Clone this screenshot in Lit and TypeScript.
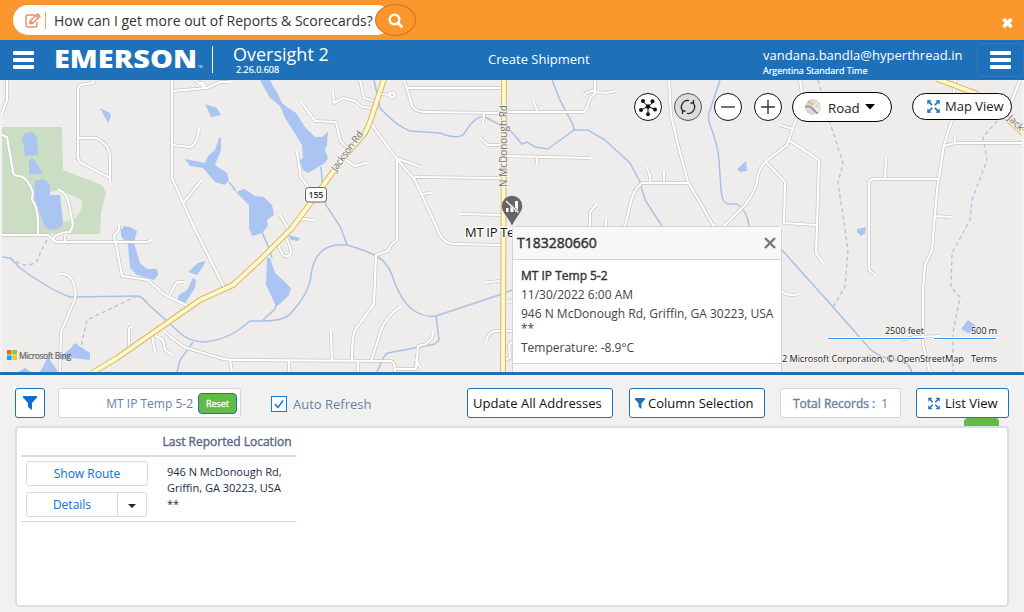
import { LitElement, html, css, svg } from "lit";
import { customElement } from "lit/decorators.js";

const water = [
  "M22 140L25 133 33 132 37 138 38 155 25 156 24 147Z",
  "M29 160L33 158 38 166 43 172 40 174 29 174Z",
  "M35 181L43 179 50 184 50 195 60 195 63 225 58 229 50 230 45 227 36 205 34 195Z",
  "M100 108L110 113 111 117 108 123Z",
  "M205 104L217 108 221 115 211 117Z",
  "M185 159L205 163 208 156 215 150 219 138 221 137 221 150 215 165 227 173 229 180 225 185 215 182 203 168 190 166Z",
  "M236 192L244 189 255 196 264 197 272 205 274 215 267 220 268 226 262 233 252 236 249 228 249 205Z",
  "M267 258L270 258 275 273 284 281 291 288 289 295 280 304 276 306 266 285Z",
  "M288 235L300 238 298 241 291 240Z",
  "M260 80L270 80 273 86 277 92 282 103 287 107 296 113 305 127 315 137 322 137 328 132 327 145 325 150 328 158 325 163 308 173 303 170 299 160 303 158 302 145 294 132 285 118 280 106 270 98 262 84Z",
  "M121 230L124 226 130 227 137 231 134 243 140 263 147 269 157 269 158 275 154 280 137 275 130 268 128 245 121 236Z",
  "M188 272L198 263 206 261 200 271 197 275Z",
  "M177 301L179 295 187 290 193 278 196 280 195 288 185 303Z",
  "M60 357L70 349 75 343 82 348 90 353 90 360 73 358 62 360Z",
  "M40 372L48 357 57 370 57 372Z",
  "M18 372L25 368 31 372Z",
  "M737 169L746 161 747 171 740 172Z",
  "M857 229L866 227 865 233 861 236 857 232Z",
  "M961 329L968 320 975 325 978 331 968 333Z",
];

const streams = [
  "M229 182L236 191",
  "M321 167L322 180 326 205 341 228 347 245",
  "M262 232L268 246 272 258",
  "M2 257L10 258 20 268Q50 290 70 297L137 296Q142 296 148 304L180 333Q190 342 205 342 225 340 240 329L250 321 262 321Q285 321 291 313 310 292 311 275 315 247 337 245L347 245Q365 250 376 256 386 260 392 275 400 300 413 310 425 318 436 316L502 294 512 290",
  "M193 342L180 360 177 372",
  "M262 321L275 309 277 302",
  "M436 316L439 340 435 344 388 353Q384 355 382 361L377 372",
  "M374 80L380 108Q395 125 410 131L440 133Q458 140 464 134 475 115 485 117L500 125 510 130 522 144 527 142 535 147 548 149 574 130",
  "M552 80L560 100 573 125 574 130 588 130 605 140 630 163 640 182 645 200 662 226",
  "M720 80L710 110Q707 115 710 125 718 145 719 160L721 190Q722 203 728 204L737 204Q748 212 749 226",
  "M782 250L833 307 870 349Q880 358 895 360 908 360 912 372",
];

const creeks = [
  "M10 258L20 264Q38 268 40 253L48 238",
  "M137 296L87 320 81 346",
  "M818 80L830 123 843 163 838 183 848 250 845 287 833 307",
  "M1012 106L998 120 983 137 987 160 972 200 970 220 952 253 951 287 960 297 953 333 953 372",
];

const roads = [
  "M7 80L7 100 2 113",
  "M94 80L93 83 80 85 78 88 78 158Q79 162 83 164L110 178 110 182M79 138L96 138Q109 144 110 155L110 178",
  "M172 80L172 178 183 203 193 225 224 287",
  "M172 91L207 88 220 82 229 82M195 80L205 88M199 84Q204 80 205 88",
  "M172 145L190 147Q197 145 199 129M183 203L201 181",
  "M2 135L7 137 13 172Q13 176 20 176 28 178 33 192L32 200Q37 205 38 220L38 234",
  "M59 190Q68 193 70 210L73 225 70 232Q54 233 53 240",
  "M2 235L48 235 56 242 148 242 151 240M65 242L65 236",
  "M119 225L119 230 114 236 117 249 122 276 148 280 165 295 188 306M169 297L175 285Q176 281 184 282",
  "M60 274Q73 273 75 290 77 298 72 306L61 332 60 372",
  "M129 350L129 330Q129 327 131 327M152 336L155 352M156 336L163 340 165 350 171 354",
  "M163 330Q180 345 187 348L220 358Q225 360 240 360L390 361Q395 361 395 372M230 360L232 372M289 361L289 372M358 362L358 372M332 361L331 332",
  "M397 160L397 240 391 245 388 251 376 255 374 304 355 330Q352 337 352 361M400 307Q383 318 378 340L371 361",
  "M433 332L432 338 426 344 418 346 416 369 396 369M416 360L420 367",
  "M415 180L437 228Q442 244 455 244L502 245M487 282L502 281M503 302L516 301M486 342Q488 331 497 331L516 331M503 360L510 358 509 345 514 340",
  "M279 246Q283 260 290 255 293 250 285 236",
  "M404 80Q409 95 412 106 416 112 425 112L504 113M407 88L504 88M484 114L483 124M480 138L488 145 500 145",
  "M372 125L396 158 415 180M396 158L421 167M415 177L500 178M421 194L431 193M461 214L502 215",
  "M382 94L390 95M373 108L362 107 355 101 343 98 334 103 333 92M374 101L364 98 360 80",
  "M302 103L315 121 336 122 340 140 346 147M346 160L355 166 366 163M297 152L301 178 309 188M280 215L288 228M297 222L303 219 313 220",
  "M505 112L584 112 587 108 590 98 595 93 595 80M584 96L586 93 595 90M596 92L606 93 616 91M537 111L534 102M505 156L590 158M537 157L537 164",
  "M669 80L671 115 678 145 688 182 713 225M688 183L642 183Q633 190 630 205L625 226M650 183L650 176 647 168M664 183L664 172M590 226L590 212 596 205M606 226L606 220",
  "M725 225L745 205Q757 190 758 175 762 163 770 158L787 145 796 120 803 100 800 80M780 125L793 129",
  "M790 141L819 160 817 225 816 253 823 263M766 162L785 182 784 223 816 225",
  "M874 274L869 270 869 183Q869 179 875 179L938 179M885 178L886 159",
  "M955 80L952 120 944 145 937 190 932 250 925 265 923 290 923 345 930 372M944 146L955 143 1022 143M955 143L955 136M935 216L951 217",
  "M782 292Q790 297 798 294M900 340L915 337 940 336M1020 80L1011 103",
];

const highways = [
  "M92 373L117 358 200 300 233 285 260 260 292 228 320 190 343 158 365 133 370 122 384 79",
  "M504 79L503 373",
  "M937 79L975 93 1000 112 1023 133",
];

const funnel = svg`<path d="M0 0H14V1.5L9 7V14L5 11V7L0 1.5Z"/>`;
const expand = svg`<g fill="none" stroke="currentColor" stroke-width="1.3"><path d="M1 4.5V1H4.5M9.500 1H13V4.500M13 9.500V13H9.500M4.500 13H1V9.500"/><path d="M1 1L5.500 5.500M13 1L8.500 5.500M1 13L5.500 8.500M13 13L8.500 8.500" stroke-width="1.700"/></g>`;

@customElement("road-map")
class RoadMap extends LitElement {
  static styles = css`
    :host { display: block; height: 292px; }
    svg { display: block; }
    text { font-family: "Open Sans", sans-serif; }
    .halo { paint-order: stroke; stroke: #fff; stroke-width: 2.5px; stroke-linejoin: round; }
    .soft { paint-order: stroke; stroke: #f6f5f0; stroke-width: 1.5px; stroke-linejoin: round; }
  `;
  render() {
    return html`<svg width="1024" height="292" viewBox="0 80 1024 292">
      <rect y="80" width="1024" height="292" fill="#f2f2f2"/>
      <rect x="2" y="80" width="1020" height="292" fill="#eeedeb"/>
      <path fill="#cbdec3" d="M2 127H62L63 170 102 185 106 193 101 213 100 234H2Z"/>
      <path fill="#e9ebe4" d="M50 192L60 190 82 200Q84 208 76 218L70 221 63 222 60 195H50Z"/>
      <g fill="#aac5f2">${water.map((d) => svg`<path d=${d}/>`)}</g>
      <g fill="none" stroke="#a9c1e6" stroke-width="1.500">${streams.map((d) => svg`<path d=${d}/>`)}</g>
      <g fill="none" stroke="#afc1e2" stroke-width="1.300" stroke-dasharray="4 3">${creeks.map((d) => svg`<path d=${d}/>`)}</g>
      <g fill="none" stroke="#c9c7c4" stroke-width="3.600" stroke-linejoin="round">${roads.map((d) => svg`<path d=${d}/>`)}<circle cx="392" cy="95" r="2.500"/></g>
      <g fill="none" stroke="#fff" stroke-width="2.200" stroke-linejoin="round" stroke-linecap="round">${roads.map((d) => svg`<path d=${d}/>`)}<circle cx="392" cy="95" r="2.500"/></g>
      <g fill="none" stroke="#dbb961" stroke-width="5.800" stroke-linejoin="round">${highways.map((d) => svg`<path d=${d}/>`)}</g>
      <g fill="none" stroke="#fff8cf" stroke-width="3.800" stroke-linejoin="round">${highways.map((d) => svg`<path d=${d}/>`)}</g>
      <g font-size="10" fill="#6f6f6f">
        <text class="soft" transform="translate(336 172) rotate(-54)" textLength="47">Jackson Rd</text>
        <text class="soft" transform="translate(506.500 187) rotate(-90)" textLength="82">N McDonough Rd</text>
        <text class="soft" transform="translate(1007 119) rotate(44)">Jack</text>
      </g>
      <rect x="305.500" y="187.500" width="21" height="14.500" rx="3" fill="#fff" stroke="#666"/>
      <text x="308.500" y="198" font-size="9" font-weight="600" fill="#333" textLength="15">155</text>
      <text class="halo" x="465" y="237" font-size="13" fill="#111" textLength="90">MT IP Temp 5-2</text>
      <path fill="#666" d="M512 225.500C508 217 501.700 212 501.700 206A10.300 10.300 0 0 1 522.300 206C522.300 212 516 217 512 225.500Z"/>
      <path fill="#fff" d="M506 208h2.500v4H506zM510.500 205h3v7h-3zM515 201h3v11h-3z"/>
      <path stroke="#666" stroke-width="2.400" d="M507 201L519 213"/><path stroke="#fff" stroke-width="1.300" d="M506 201L518.500 212.500"/>
      <path fill="#f26522" d="M7 350h4.600v4.600H7z"/><path fill="#8dc63f" d="M12.400 350H17v4.600h-4.600z"/>
      <path fill="#00aeef" d="M7 355.400h4.600V360H7z"/><path fill="#ffc20e" d="M12.400 355.400H17V360h-4.600z"/>
      <text x="19" y="358.500" font-size="8.500" fill="#666" stroke="#666" stroke-width=".2" textLength="52">Microsoft Bing</text>
      <path stroke="#fff" stroke-width="3" d="M827 338.500H924.500M933.500 338.500H997"/>
      <path stroke="#3b93ee" d="M828 338.500H924M934 338.500H996"/>
      <g font-size="9.300" fill="#222">
        <text class="soft" x="885" y="334" textLength="39">2500 feet</text>
        <text class="soft" x="971" y="334" textLength="26">500 m</text>
        <text class="soft" x="782" y="362" textLength="182">2 Microsoft Corporation, © OpenStreetMap</text>
        <text class="soft" x="971" y="362" textLength="26">Terms</text>
      </g>
    </svg>`;
  }
}

@customElement("app-root")
class AppRoot extends LitElement {
  static styles = css`
    :host { display: flex; flex-direction: column; width: 1024px; height: 612px; overflow: hidden; background: #f1f1f1; font-family: "Open Sans", sans-serif; color: #333; }
    * { box-sizing: border-box; }
    svg { display: block; flex: none; }
    div, span, button { white-space: nowrap; }
    button { font: inherit; padding: 0; }
    .banner { height: 40px; flex: none; background: #fa962c; display: flex; align-items: center; padding: 0 10px 0 13px; }
    .search { display: flex; align-items: center; width: 379px; height: 30px; background: #fff; border-radius: 15px; padding-left: 12px; }
    .bar { width: 1px; height: 17px; background: #f0a07a; margin: 1px 8px 0 4px; }
    .ask { font-size: 14px; line-height: 30px; width: 318px; padding-top: 1px; }
    .go { width: 41px; height: 32px; margin-left: -17px; border: 1px solid #c9781f; border-radius: 50%; background: #fa962c; display: grid; place-items: center; }
    .close { margin: 5px 0 0 auto; }
    .top { height: 40px; flex: none; background: #1e70b9; color: #fff; display: flex; }
    .burger { width: 21px; display: flex; flex-direction: column; gap: 3px; }
    .burger i { height: 4px; background: #fff; border-radius: 1px; }
    .left { display: flex; width: 488px; padding-left: 13px; }
    .left .burger { margin-top: 11px; }
    .logo { margin-left: 20px; }
    .rule { width: 1px; height: 27px; background: #fff; margin: 6px 0 0 9px; }
    .app { padding-left: 20px; }
    .name { font-size: 18px; line-height: 20px; margin-top: 4px; }
    .ver { font-size: 9px; line-height: 11px; padding-left: 3px; -webkit-text-stroke: .2px; }
    .title { width: 275px; font-size: 13px; line-height: 39px; }
    .user { width: 214px; }
    .mail { font-size: 13px; line-height: 18px; margin-top: 6px; letter-spacing: .02px; }
    .zone { font-size: 9px; line-height: 13px; -webkit-text-stroke: .2px; }
    .menu { width: 47px; height: 34px; margin-top: 3px; border: 1px solid #2d7bc0; border-radius: 4px; padding: 7px 0 0 12px; }
    .map { position: relative; flex: none; height: 295px; overflow: hidden; border-bottom: 3px solid #1e70b9; }
    .tools { position: absolute; top: 12px; left: 634px; display: flex; align-items: center; }
    .tools .disc { width: 28px; height: 28px; margin-right: 12px; border: 1px solid #111; border-radius: 50%; background: #fff; display: grid; place-items: center; }
    .tools .dim { background: #dcdcdc; border-color: #555; }
    .pill { display: flex; align-items: center; border: 1px solid #000; border-radius: 16px; background: #fff; font-size: 13.300px; color: #222; }
    .road { width: 100px; height: 30px; padding-left: 12px; margin-left: -2px; }
    .road svg + span { margin: 1px 5px 0 7px; }
    .view { width: 100px; height: 27px; margin: -2px 0 0 20px; padding-left: 14px; gap: 5px; font-size: 13px; }
    .popup { position: absolute; left: 512px; top: 146px; width: 270px; height: 170px; background: #fff; border: 1px solid #d4d4d4; border-radius: 4px; font-size: 12px; color: #444; }
    .head { height: 33px; background: #f7f7f7; border-bottom: 1px solid #d4d4d4; display: flex; align-items: center; justify-content: space-between; padding: 0 5px 0 4px; font-size: 14px; line-height: 32px; color: #333; -webkit-text-stroke: .45px #333; }
    .tid { margin-top: -1px; }
    .info { padding: 6px 8px 0; line-height: 19px; height: 103px; }
    .info b { font-weight: 400; -webkit-text-stroke: .4px #333; color: #333; }
    .stars { line-height: 11px; padding-top: 0; }
    .temp { margin-top: 4px; }
    .foot { border-top: 1px solid #d4d4d4; height: 30px; background: #f7f7f7; }
    .bar2 { height: 43px; flex: none; display: flex; padding: 13px 15px 0; align-items: flex-start; font-size: 13px; color: #111; }
    .btn { height: 30px; background: #fff; border: 1px solid #1e70b9; border-radius: 3px; display: flex; align-items: center; color: #111; }
    .filter { width: 30px; justify-content: center; color: #0b6fd3; }
    .muted { border-color: #d2d6dd; color: #6b7fa3; }
    .term { width: 183px; margin-left: 13px; justify-content: flex-end; padding-right: 3px; gap: 5px; font-size: 12px; }
    .reset { width: 39px; height: 21px; background: #61bb46; border: 1px solid #1e70b9; border-radius: 4px; color: #fff; font-size: 9px; -webkit-text-stroke: .3px; }
    .auto { display: flex; align-items: center; gap: 6px; width: 196px; margin: 8px 0 0 30px; height: 16px; color: #6b7fa3; font-size: 13px; }
    .box { width: 16px; height: 16px; border: 1px solid #0b7be8; background: #fff; }
    .update { width: 146px; padding-left: 5px; }
    .column { width: 136px; margin-left: 16px; padding-left: 5px; gap: 3px; }
    .total { width: 121px; margin-left: 15px; padding-left: 12px; gap: 6px; font-size: 12px; }
    .total b { font-weight: 400; -webkit-text-stroke: .4px; }
    .list { width: 93px; margin-left: 15px; padding-left: 11px; gap: 5px; }
    .tabrow { height: 8px; flex: none; display: flex; justify-content: flex-end; padding-right: 25px; }
    .tab { width: 35px; background: #61bb46; border-radius: 4px 4px 0 0; }
    .panel { width: 994px; height: 181px; margin-left: 15px; background: #fff; border: 2px solid #d9dde8; border-radius: 4px; padding-left: 4px; }
    .grid { width: 275px; }
    .th { height: 29px; border-bottom: 2px solid #d9dae6; line-height: 28px; font-size: 12px; color: #5a6785; text-align: right; padding-right: 4.500px; -webkit-text-stroke: .4px; }
    .tr { display: flex; height: 65px; border-bottom: 1px solid #d9dae6; padding: 4px 0 0 5px; }
    .acts { width: 141px; display: flex; flex-direction: column; gap: 6px; font-size: 12px; }
    .act { width: 122px; height: 25px; border: 1px solid #d9dae6; border-radius: 3px; color: #0b6fd3; background: #fff; display: flex; align-items: center; }
    .act span { flex: 1; text-align: center; }
    .act .drop { flex: none; width: 29px; height: 23px; border-left: 1px solid #d9dae6; display: grid; place-items: center; padding-top: 3px; }
    .split { width: 121px; }
    .addr { font-size: 11px; line-height: 16px; color: #222b45; padding-top: 3px; }
  `;

  render() {
    return html`
      <div class="banner">
        <div class="search">
          <svg width="16" height="15" viewBox="0 0 16 15" fill="none" stroke="#ef8c62" stroke-width="1.400"><path d="M10 2H3Q1 2 1 4V12Q1 14 3 14H10Q12 14 12 12V9"/><path fill="#fff" d="M5 10.500V8L12.500 .900 15 3.300 7.500 10.500ZM11 2.500L13.300 4.800M5.500 8.200L7.500 10.200"/></svg>
          <div class="bar"></div><div class="ask">How can I get more out of Reports &amp; Scorecards?</div>
        </div>
        <div class="go"><svg width="17" height="17" viewBox="0 0 17 17" fill="none" stroke="#fff"><circle cx="7.500" cy="7.500" r="4.800" stroke-width="2.400"/><path d="M11.200 11.200L14.500 14.500" stroke-width="2.800" stroke-linecap="round"/></svg></div>
        <svg class="close" width="13" height="12" viewBox="0 0 13 12"><path d="M2.500 2L10.500 10M10.500 2L2.500 10" stroke="#fff" stroke-width="3.800"/></svg>
      </div>
      <div class="top">
        <div class="left">
          <div class="burger"><i></i><i></i><i></i></div>
          <svg class="logo" width="149" height="38" viewBox="0 0 149 38"><text x="0" y="28" font-size="24" font-weight="800" font-family="Open Sans" fill="#fff" textLength="143" lengthAdjust="spacingAndGlyphs">EMERSON</text><text x="144" y="28" font-size="3" font-family="Open Sans" fill="#fff">TM</text></svg>
          <div class="rule"></div>
          <div class="app"><div class="name">Oversight 2</div><div class="ver">2.26.0.608</div></div>
        </div>
        <div class="title">Create Shipment</div>
        <div class="user"><div class="mail">vandana.bandla@hyperthread.in</div><div class="zone">Argentina Standard Time</div></div>
        <div class="menu"><div class="burger"><i></i><i></i><i></i></div></div>
      </div>
      <div class="map">
        <road-map></road-map>
        <div class="tools">
          <div class="disc"><svg width="20" height="20" viewBox="0 0 20 20" stroke="#111"><path d="M10 9.500L4.500 4M10 9.500L15.500 5M10 9.500L3 13M10 9.500L17 12.500M10 9.500V17"/><g fill="#111" stroke="none"><circle cx="10" cy="9.500" r="2.300"/><circle cx="5" cy="4" r="2"/><circle cx="14.500" cy="4.200" r="2"/><circle cx="3" cy="13" r="2"/><circle cx="17" cy="12.500" r="2"/><circle cx="10" cy="17.200" r="2"/></g></svg></div>
          <div class="disc dim"><svg width="18" height="18" viewBox="0 0 18 18" fill="none" stroke="#222" stroke-width="1.300"><path d="M4.200 13.500A6.500 6.500 0 0 1 10 2.600M13.800 4.500A6.500 6.500 0 0 1 8 15.400M14.500 2V5H11.500M3.500 16V13H6.500"/></svg></div>
          <div class="disc"><svg width="14" height="14"><path stroke="#333" stroke-width="1.400" d="M0 7H14"/></svg></div>
          <div class="disc"><svg width="14" height="14"><path stroke="#333" stroke-width="1.400" d="M0 7H14M7 0V14"/></svg></div>
          <div class="pill road"><svg width="16" height="16" viewBox="0 0 16 16"><circle cx="8" cy="8" r="8" fill="#ddd8cd"/><path d="M3 2L14 12M9 16L16 6M7 8L14 2" stroke="#fff"/><path d="M0 8Q5 6 8 10T13 14" fill="none" stroke="#a187c0" stroke-width="1.800"/><path d="M3 2L8 6" stroke="#eba74c" stroke-width="1.600"/></svg><span>Road</span><svg width="10" height="6"><path d="M0 0H10L5 5.500Z"/></svg></div>
          <div class="pill view"><svg width="13" height="13" viewBox="0 0 14 14" color="#1e70b9">${expand}</svg><span>Map View</span></div>
        </div>
        <div class="popup">
          <div class="head"><span class="tid">T183280660</span><svg width="12" height="12"><path d="M1 1L11 11M11 1L1 11" stroke="#777" stroke-width="2.400"/></svg></div>
          <div class="info"><b>MT IP Temp 5-2</b><div>11/30/2022 6:00 AM</div><div>946 N McDonough Rd, Griffin, GA 30223, USA</div><div class="stars">**</div><div class="temp">Temperature: -8.9°C</div></div>
          <div class="foot"></div>
        </div>
      </div>
      <div class="bar2">
        <div class="btn filter"><svg width="14" height="14" viewBox="0 0 14 14" fill="currentColor">${funnel}</svg></div>
        <div class="btn muted term"><span>MT IP Temp 5-2</span><button class="reset">Reset</button></div>
        <div class="auto"><div class="box"><svg width="14" height="14"><path d="M3 7L6 10.500 11 3.500" fill="none" stroke="#0b7be8" stroke-width="1.500"/></svg></div><span>Auto Refresh</span></div>
        <div class="btn update"><span>Update All Addresses</span></div>
        <div class="btn column"><svg width="10" height="11" viewBox="0 0 14 14" preserveAspectRatio="none" fill="#1e70b9">${funnel}</svg><span>Column Selection</span></div>
        <div class="btn muted total"><b>Total Records :</b><span>1</span></div>
        <div class="btn list"><svg width="12" height="13" viewBox="0 0 14 14" color="#1e70b9">${expand}</svg><span>List View</span></div>
      </div>
      <div class="tabrow"><div class="tab"></div></div>
      <div class="panel">
        <div class="grid">
          <div class="th">Last Reported Location</div>
          <div class="tr">
            <div class="acts"><div class="act"><span>Show Route</span></div><div class="act split"><span>Details</span><div class="drop"><svg width="8" height="5"><path fill="#222" d="M0 0H8L4 4Z"/></svg></div></div></div>
            <div class="addr">946 N McDonough Rd,<br>Griffin, GA 30223, USA<br>**</div>
          </div>
        </div>
      </div>`;
  }
}
